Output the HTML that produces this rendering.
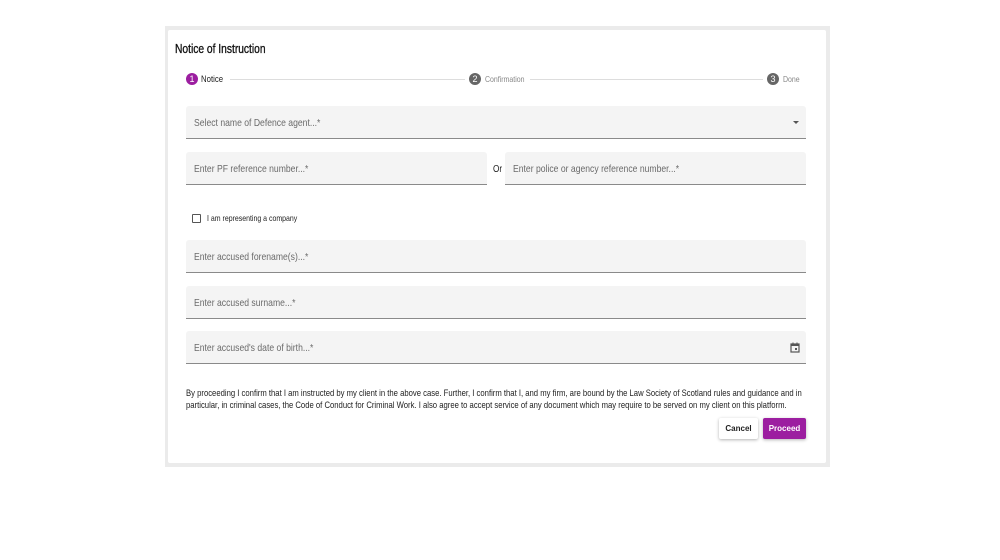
<!DOCTYPE html>
<html><head><style>
*{margin:0;padding:0;box-sizing:border-box}
body{width:1000px;height:560px;background:#fff;font-family:"Liberation Sans",sans-serif;position:relative;overflow:hidden;color:#222}
.a{position:absolute}
.n{transform:scaleX(.82);transform-origin:left center;white-space:nowrap}
.frame{left:165px;top:26px;width:665px;height:441px;background:#ebebeb}
.card{left:168px;top:30px;width:658px;height:433px;background:#fff;border-radius:2px}
.f{position:absolute;background:#f4f4f4;border-bottom:1px solid #8a8a8a;border-radius:3px 3px 0 0}
.f span{position:absolute;left:8px;top:11px;font-size:10.5px;color:#6a6a6a;transform:scaleX(.82);transform-origin:left center;white-space:nowrap}
.circ{position:absolute;width:12px;height:12px;border-radius:50%;color:#fff;font-size:9px;text-align:center;line-height:12px}
.lbl{position:absolute;font-size:9px}
.line{position:absolute;height:1px;background:#ddd}
</style></head><body>
<div class="a frame"></div>
<div class="a card"></div>
<div class="a n" style="left:175px;top:42px;font-size:12.5px;color:#111;-webkit-text-stroke:.3px #111">Notice of Instruction</div>

<div class="circ" style="left:186px;top:73px;background:#9c1ea0">1</div>
<div class="lbl n" style="left:201px;top:74px;color:#222;font-size:9.5px">Notice</div>
<div class="line" style="left:230px;top:79px;width:235px"></div>
<div class="circ" style="left:469px;top:73px;background:#666">2</div>
<div class="lbl n" style="left:485px;top:74px;color:#888;font-size:8.5px">Confirmation</div>
<div class="line" style="left:530px;top:79px;width:233px"></div>
<div class="circ" style="left:767px;top:73px;background:#666">3</div>
<div class="lbl n" style="left:783px;top:74px;color:#888;font-size:8.5px">Done</div>

<div class="f" style="left:186px;top:106px;width:620px;height:33px"><span>Select name of Defence agent...*</span>
<div style="position:absolute;right:7px;top:15px;border-left:3px solid transparent;border-right:3px solid transparent;border-top:3px solid #555"></div></div>
<div class="f" style="left:186px;top:152px;width:301px;height:33px"><span>Enter PF reference number...*</span></div>
<div class="a n" style="left:493px;top:164px;font-size:10px">Or</div>
<div class="f" style="left:505px;top:152px;width:301px;height:33px"><span>Enter police or agency reference number...*</span></div>

<div class="a" style="left:192px;top:214px;width:9px;height:9px;border:1px solid #555;border-radius:1px"></div>
<div class="a n" style="left:207px;top:213px;font-size:8.5px">I am representing a company</div>

<div class="f" style="left:186px;top:240px;width:620px;height:33px"><span>Enter accused forename(s)...*</span></div>
<div class="f" style="left:186px;top:286px;width:620px;height:33px"><span>Enter accused surname...*</span></div>
<div class="f" style="left:186px;top:331px;width:620px;height:33px"><span>Enter accused's date of birth...*</span>
<svg style="position:absolute;right:6px;top:11px" width="10" height="11" viewBox="0 0 10 11"><rect x="1" y="2" width="8" height="8" fill="none" stroke="#555" stroke-width="1.2"/><rect x="1" y="2" width="8" height="2" fill="#555"/><rect x="2.5" y="0.5" width="1" height="2" fill="#555"/><rect x="6.5" y="0.5" width="1" height="2" fill="#555"/><rect x="5" y="6" width="2" height="2" fill="#555"/></svg></div>

<div class="a" style="left:186px;top:387px;width:764px;font-size:9.4px;line-height:12px;color:#222;transform:scaleX(.82);transform-origin:left top">By proceeding I confirm that I am instructed by my client in the above case. Further, I confirm that I, and my firm, are bound by the Law Society of Scotland rules and guidance and in particular, in criminal cases, the Code of Conduct for Criminal Work. I also agree to accept service of any document which may require to be served on my client on this platform.</div>

<div class="a" style="left:719px;top:418px;width:39px;height:21px;background:#fff;box-shadow:0 1px 3px rgba(0,0,0,.3);border-radius:2px;font-size:8px;font-weight:bold;text-align:center;line-height:21px">Cancel</div>
<div class="a" style="left:763px;top:418px;width:43px;height:21px;background:#9c1ea0;box-shadow:0 1px 3px rgba(0,0,0,.3);border-radius:2px;font-size:8px;font-weight:bold;color:#fff;text-align:center;line-height:21px">Proceed</div>
</body></html>
